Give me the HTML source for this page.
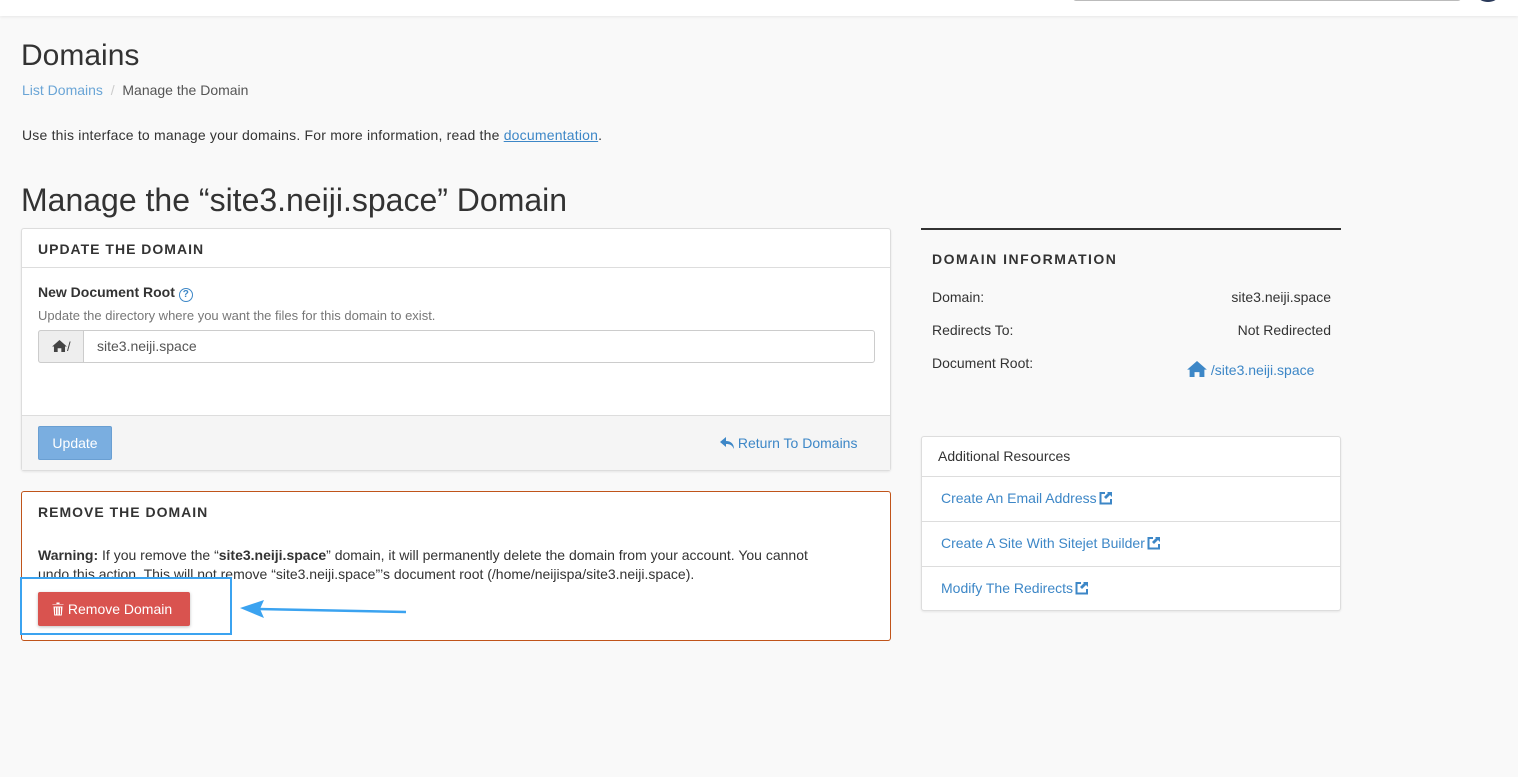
<!DOCTYPE html>
<html><head><meta charset="utf-8"><style>
*{box-sizing:border-box;margin:0;padding:0}
body{width:1518px;height:777px;background:#f9f9f9;font-family:"Liberation Sans",sans-serif;color:#333;position:relative;overflow:hidden;font-size:14px}
.a{position:absolute;white-space:nowrap}
.blue{color:#3d87c7}
.panel{position:absolute;background:#fff;border:1px solid #ddd;border-radius:3px}
.h{font-size:14px;letter-spacing:1px;font-weight:bold;color:#333}
.ext{vertical-align:-2px;margin-left:2px}
</style></head><body>
<div class="a" style="left:0;top:0;width:1518px;height:16px;background:#fff;box-shadow:0 1px 3px rgba(0,0,0,.08)"></div>
<div class="a" style="left:1073px;top:-10px;width:388px;height:11px;border:1px solid #bbb;border-radius:3px;background:#fff"></div>
<div class="a" style="left:1478px;top:-10px;width:20px;height:12px;border:2px solid #2a3a5a;border-radius:50%"></div>

<div class="a" style="left:21px;top:39px;font-size:30px;font-weight:300;color:#333">Domains</div>
<div class="a" style="left:22px;top:82px;font-size:14px"><span class="blue" style="color:#6aa5d6">List Domains</span> <span style="color:#ccc">&nbsp;/&nbsp;</span> <span style="color:#555">Manage the Domain</span></div>
<div class="a" style="left:22px;top:127px;font-size:14px;letter-spacing:0.2px">Use this interface to manage your domains. For more information, read the <span class="blue" style="text-decoration:underline">documentation</span>.</div>
<div class="a" style="left:21px;top:182px;font-size:32px;color:#333">Manage the “site3.neiji.space” Domain</div>

<div class="panel" style="left:21px;top:228px;width:870px;height:243px;box-shadow:0 1px 2px rgba(0,0,0,.08)">
 <div class="a h" style="left:16px;top:12px">UPDATE THE DOMAIN</div>
 <div class="a" style="left:0;top:38px;width:868px;border-top:1px solid #ddd"></div>
 <div class="a" style="left:16px;top:55px;font-weight:bold;font-size:14px">New Document Root <span style="display:inline-block;width:14px;height:14px;border:1.5px solid #3d87c7;border-radius:50%;color:#3d87c7;font-size:10px;text-align:center;line-height:11px;vertical-align:0px">?</span></div>
 <div class="a" style="left:16px;top:79px;font-size:13px;color:#777">Update the directory where you want the files for this domain to exist.</div>
 <div class="a" style="left:16px;top:101px;width:837px;height:33px;border:1px solid #ccc;border-radius:3px;background:#fff"></div>
 <div class="a" style="left:16px;top:101px;width:46px;height:33px;border:1px solid #ccc;border-radius:3px 0 0 3px;background:#eee;font-size:13px;color:#444;padding:8px 0 0 13px"><svg width="15" height="12" viewBox="0 0 16 13" style="vertical-align:-1px"><path d="M8 0L0 7h2v6h4V9h4v4h4V7h2z" fill="#444"/></svg>/</div>
 <div class="a" style="left:75px;top:109px;font-size:14px;color:#555">site3.neiji.space</div>
 <div class="a" style="left:0;top:186px;width:868px;height:55px;background:#f5f5f5;border-top:1px solid #ddd"></div>
 <div class="a" style="left:16px;top:197px;width:74px;height:34px;background:#7aaee0;border:1px solid #6a9fd2;border-radius:2px;color:#fff;font-size:14px;text-align:center;line-height:32px">Update</div>
 <div class="a blue" style="left:698px;top:206px;font-size:14px"><svg width="14" height="12" viewBox="0 0 14 12" style="vertical-align:-1px"><path d="M6 0L0 5l6 5V7c4 0 6 1 8 5 0-5-3-8-8-8z" fill="#3d87c7"/></svg> Return To Domains</div>
</div>

<div class="panel" style="left:21px;top:491px;width:870px;height:150px;border-color:#c0541a">
 <div class="a h" style="left:16px;top:12px">REMOVE THE DOMAIN</div>
 <div class="a" style="left:16px;top:54px;font-size:14px;line-height:19px;white-space:normal;width:790px"><b>Warning:</b> If you remove the “<b>site3.neiji.space</b>” domain, it will permanently delete the domain from your account. You cannot undo this action. This will not remove “site3.neiji.space”’s document root (/home/neijispa/site3.neiji.space).</div>
 <div class="a" style="left:16px;top:100px;width:152px;height:34px;background:#d9534f;border-radius:2px;color:#fff;font-size:14px;line-height:34px;padding-left:14px;box-shadow:0 1px 3px rgba(0,0,0,.25)"><svg width="12" height="14" viewBox="0 0 12 14" style="vertical-align:-2px"><path d="M4 0h4v1.5h4V3H0V1.5h4zM1 4h10l-.8 10H1.8zM3.5 5.5v7M6 5.5v7M8.5 5.5v7" fill="#fff" stroke="#d9534f" stroke-width="0.9"/></svg> Remove Domain</div>
</div>
<div class="a" style="left:20px;top:577px;width:212px;height:58px;border:2px solid #3ba3f0"></div>
<svg class="a" style="left:238px;top:598px" width="172" height="22"><path d="M20 11 L168 14" stroke="#3ba3f0" stroke-width="2.5"/><path d="M2 10 L26 2 L22 11 L26 20 Z" fill="#3ba3f0"/></svg>

<div class="a" style="left:921px;top:228px;width:420px;border-top:2px solid #333"></div>
<div class="a h" style="left:932px;top:251px;letter-spacing:1.5px">DOMAIN INFORMATION</div>
<div class="a" style="left:932px;top:289px">Domain:</div>
<div class="a" style="right:187px;top:289px">site3.neiji.space</div>
<div class="a" style="left:932px;top:322px">Redirects To:</div>
<div class="a" style="right:187px;top:322px">Not Redirected</div>
<div class="a" style="left:932px;top:355px">Document Root:</div>
<div class="a blue" style="left:1187px;top:361px"><svg width="20" height="16" viewBox="0 0 16 13" style="vertical-align:-2px"><path d="M8 0L0 7h2v6h4V9h4v4h4V7h2z" fill="#3d87c7"/></svg> /site3.neiji.space</div>

<div class="panel" style="left:921px;top:436px;width:420px;height:175px;box-shadow:0 1px 2px rgba(0,0,0,.08)">
 <div class="a" style="left:16px;top:11px">Additional Resources</div>
 <div class="a" style="left:0;top:39px;width:418px;border-top:1px solid #ddd"></div>
 <div class="a blue" style="left:19px;top:53px">Create An Email Address<svg class="ext" width="14" height="14" viewBox="0 0 14 14"><path d="M6 2H1.5v10.5H12V8" fill="none" stroke="#3d87c7" stroke-width="2"/><path d="M8 1h5v5l-2-2-4 4-2-2 4-4z" fill="#3d87c7"/></svg></div>
 <div class="a" style="left:0;top:84px;width:418px;border-top:1px solid #ddd"></div>
 <div class="a blue" style="left:19px;top:98px">Create A Site With Sitejet Builder<svg class="ext" width="14" height="14" viewBox="0 0 14 14"><path d="M6 2H1.5v10.5H12V8" fill="none" stroke="#3d87c7" stroke-width="2"/><path d="M8 1h5v5l-2-2-4 4-2-2 4-4z" fill="#3d87c7"/></svg></div>
 <div class="a" style="left:0;top:129px;width:418px;border-top:1px solid #ddd"></div>
 <div class="a blue" style="left:19px;top:143px">Modify The Redirects<svg class="ext" width="14" height="14" viewBox="0 0 14 14"><path d="M6 2H1.5v10.5H12V8" fill="none" stroke="#3d87c7" stroke-width="2"/><path d="M8 1h5v5l-2-2-4 4-2-2 4-4z" fill="#3d87c7"/></svg></div>
</div>
</body></html>
